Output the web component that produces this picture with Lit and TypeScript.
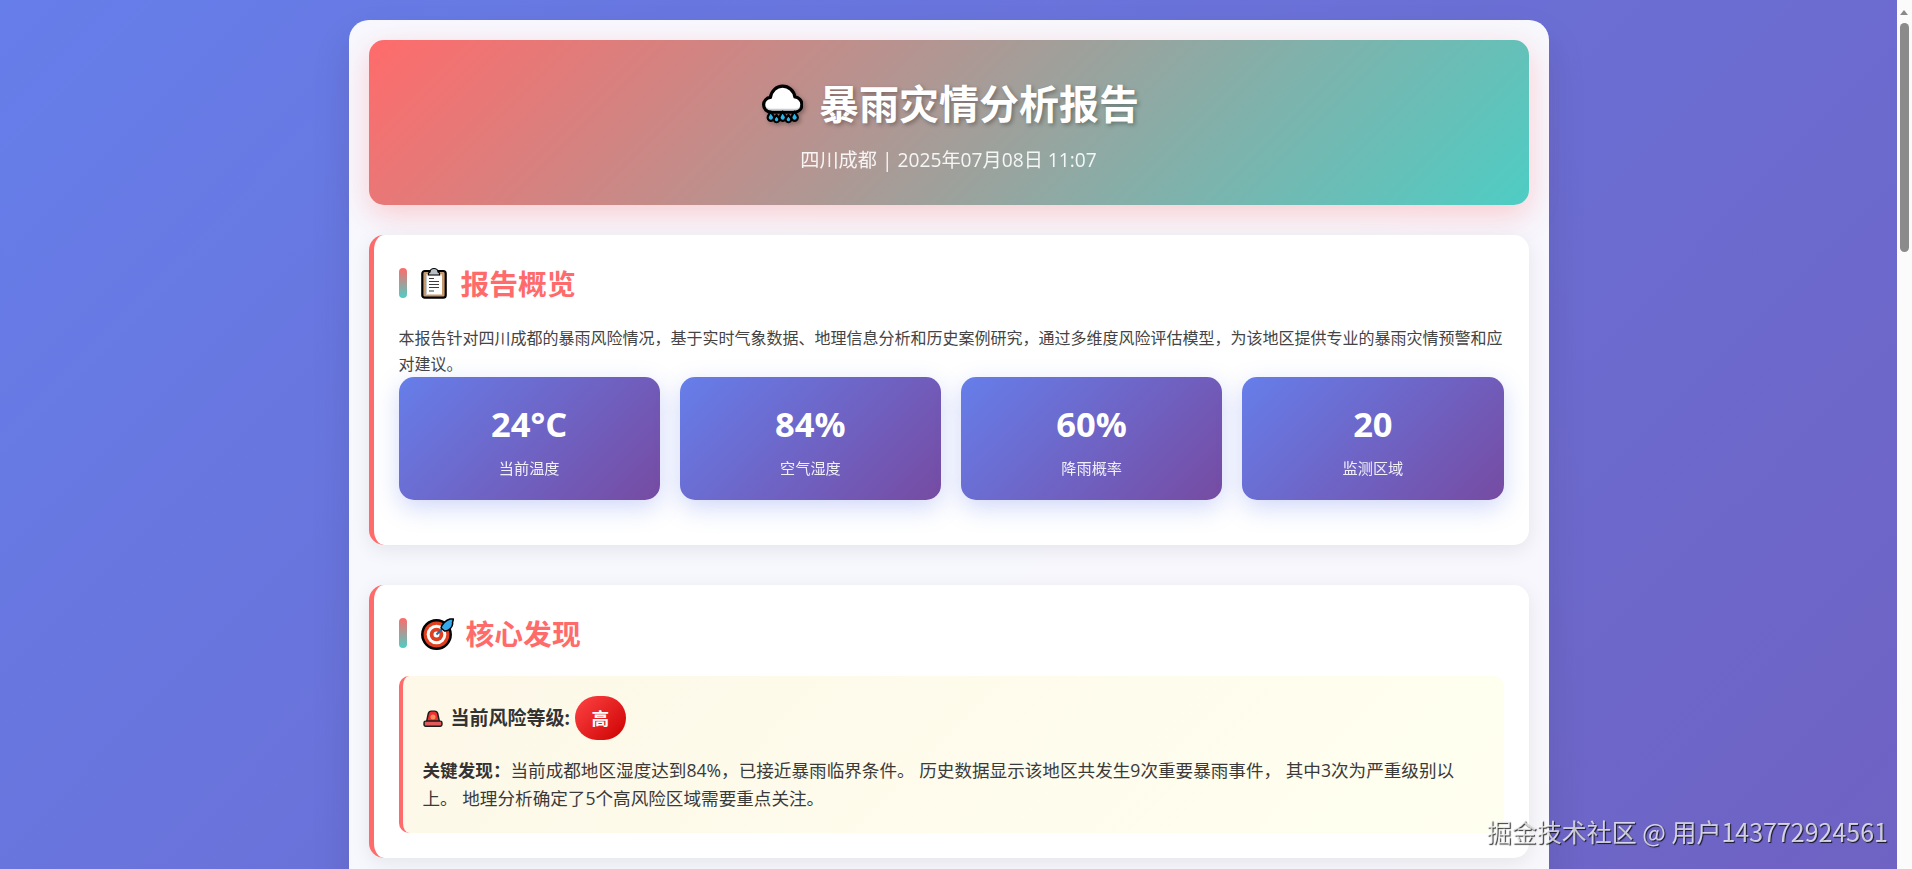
import { css, html, LitElement, svg } from "lit";
import { customElement } from "lit/decorators.js";

const rainIcon = svg`
  <path d="M10 27c-4.500 0-7.500-3-7.500-6.800 0-3.600 2.800-6.500 6.300-6.800C9.700 7.400 14.300 3 20 3c5.900 0 10.600 4.300 11.500 10 3.600.3 6.500 3.300 6.500 7 0 3.900-3 7-7 7z" fill="#fff" stroke="#000" stroke-width="3" stroke-linejoin="round"/>
  <path d="M4.500 21.500c.6 3 3 4 5.500 4h21c2.600 0 5-1.200 5.700-4-1 1.600-3 2.500-5.700 2.500H10c-2.600 0-4.500-.9-5.500-2.500z" fill="#c9ccd1"/>
  <g fill="#29b6e8" stroke="#000" stroke-width="2" stroke-linejoin="round">
    <path d="M9 26.500l3 4.500a3 3 0 1 1-5.600 0z"/>
    <path d="M20 26.500l3 4.500a3 3 0 1 1-5.600 0z"/>
    <path d="M31 26.500l3 4.500a3 3 0 1 1-5.600 0z"/>
    <path d="M14.500 29.500l2.400 3.300a2.600 2.600 0 1 1-4.800 0z"/>
    <path d="M25.500 29.500l2.400 3.300a2.600 2.600 0 1 1-4.800 0z"/>
  </g>`;

const clipboardIcon = svg`
  <rect x="1.300" y="4" width="23.400" height="26.700" rx="2.500" fill="#c69a6d" stroke="#000" stroke-width="2.200"/>
  <rect x="5" y="7.500" width="16" height="20" fill="#fff"/>
  <path d="M5 7.500h16v1H6v19H5z" fill="#c8ccd0"/>
  <path d="M9 5c0-2 2-3.500 4-3.500s4 1.500 4 3.500l1.500 1v2h-11V6z" fill="#b9bfc5" stroke="#000" stroke-width="1.200" stroke-linejoin="round"/>
  <path d="M8 11.500h5M8 14.500h10M8 17.500h10M8 20.500h10M8 24h5" stroke="#3c3c3c" stroke-width="1.200" fill="none"/>`;

const targetIcon = svg`
  <circle cx="15.500" cy="17.500" r="14.200" fill="#e0401f" stroke="#000" stroke-width="2.500"/>
  <circle cx="15.500" cy="17.500" r="9.800" fill="#fff"/>
  <circle cx="15.500" cy="17.500" r="6.800" fill="#e0401f"/>
  <circle cx="15.500" cy="17.500" r="3" fill="#fff"/>
  <path d="M15.500 17.500L23 10" stroke="#1f6fb5" stroke-width="2"/>
  <path d="M20 11c1-4 5-8 9-9l3.500 0-1 3.500c1 4-4 9-8 8.500z" fill="#35a9ee" stroke="#000" stroke-width="1.500" stroke-linejoin="round"/>`;

const sirenIcon = svg`
  <path d="M3.500 10.500l1.500-7C5.400 1.800 6.500 1 8 1h3c1.500 0 2.600.8 3 2.500l1.500 7z" fill="#ee2f2f" stroke="#1c1c1c" stroke-width="1.400" stroke-linejoin="round"/>
  <circle cx="9.500" cy="6.500" r="2.400" fill="#ff8a5c"/>
  <rect x="1" y="10.500" width="17" height="4.800" rx="1.500" fill="#e25a5a" stroke="#1c1c1c" stroke-width="1.400"/>`;

const stats = [
  { value: "24°C", label: "当前温度" },
  { value: "84%", label: "空气湿度" },
  { value: "60%", label: "降雨概率" },
  { value: "20", label: "监测区域" },
];

@customElement("app-root")
export class AppRoot extends LitElement {
  static styles = css`
    :host {
      display: flex;
      height: 100vh;
      overflow: hidden;
      font-family: "Open Sans", "Noto Sans CJK SC", sans-serif;
      font-size: 16px;
      line-height: 1.6;
      color: #333;
    }

    .viewport {
      flex: 1;
      min-width: 0;
      overflow: hidden;
    }

    .page {
      min-height: 3155px;
      padding: 20px 0;
      box-sizing: border-box;
      background: linear-gradient(135deg, #667eea 0%, #764ba2 100%);
    }

    .container {
      width: 1200px;
      margin: 0 auto;
      padding: 20px;
      box-sizing: border-box;
      min-height: 3115px;
      background: rgba(255, 255, 255, 0.95);
      border-radius: 20px;
      box-shadow: 0 20px 40px rgba(0, 0, 0, 0.1);
    }

    .header {
      padding: 30px;
      text-align: center;
      color: #fff;
      border-radius: 15px;
      margin-bottom: 30px;
      background: linear-gradient(135deg, #ff6b6b, #4ecdc4);
      box-shadow: 0 10px 30px rgba(255, 107, 107, 0.3);
    }

    h1 {
      margin: 0 0 8px;
      padding: 2px 0 0 4px;
      font-size: 40px;
      font-weight: 700;
      line-height: 64px;
      display: flex;
      justify-content: center;
      align-items: center;
      gap: 16px;
      text-shadow: 2px 2px 4px rgba(0, 0, 0, 0.3);
    }

    .rain {
      width: 41px;
      height: 40px;
      filter: drop-shadow(2px 2px 2px rgba(0, 0, 0, 0.3));
    }

    .subtitle {
      font-size: 19.2px;
      line-height: 31px;
      opacity: 0.9;
    }

    .section {
      margin-bottom: 40px;
      padding: 25px;
      background: #fff;
      border-left: 5px solid #ff6b6b;
      border-radius: 15px;
      box-shadow: 0 5px 20px rgba(0, 0, 0, 0.08);
    }

    h2 {
      margin: 0 0 20px;
      display: flex;
      align-items: center;
      height: 46px;
      font-size: 28.8px;
      font-weight: 700;
      line-height: 44px;
      color: #ff6b6b;
    }

    .title-text {
      padding-top: 2px;
    }

    .bar {
      width: 8px;
      height: 30px;
      margin-right: 14px;
      border-radius: 4px;
      background: linear-gradient(180deg, #ff6b6b, #4ecdc4);
    }

    .clipboard {
      width: 26px;
      height: 32px;
      margin-right: 14px;
    }

    .target {
      width: 33px;
      height: 33px;
      margin-right: 12px;
    }

    p {
      margin: 0;
      color: #444;
    }

    .stats {
      display: grid;
      grid-template-columns: repeat(4, 1fr);
      gap: 20px;
      margin-bottom: 20px;
    }

    .stat {
      padding: 20px;
      text-align: center;
      color: #fff;
      border-radius: 15px;
      background: linear-gradient(135deg, #667eea, #764ba2);
      box-shadow: 0 8px 25px rgba(102, 126, 234, 0.3);
    }

    .value {
      font-size: 34.5px;
      font-weight: 700;
      line-height: 53px;
      margin-bottom: 7px;
    }

    .label {
      font-size: 15.2px;
      line-height: 23px;
      opacity: 0.9;
    }

    .finding {
      padding: 20px;
      border-left: 4px solid #ff6b6b;
      border-radius: 10px;
      background: linear-gradient(135deg, #fdf8e8, #fffff0);
    }

    .risk {
      display: flex;
      align-items: center;
      margin-bottom: 16px;
      font-size: 19px;
      font-weight: 700;
    }

    .siren {
      width: 20px;
      height: 17px;
      margin-right: 8px;
    }

    .badge {
      width: 51px;
      height: 44px;
      margin-left: 5px;
      display: flex;
      align-items: center;
      justify-content: center;
      color: #fff;
      font-size: 17.6px;
      border-radius: 25px;
      background: linear-gradient(135deg, #ff4444, #cc0000);
    }

    .finding p {
      font-size: 17.6px;
      line-height: 28.160px;
      color: #3a3a3a;
    }

    .finding strong {
      color: #333;
    }

    .scrollbar {
      width: 15px;
      flex: none;
      position: relative;
      background: #fbfbfb;
    }

    .arrow {
      position: absolute;
      top: 10px;
      left: 3px;
      border-left: 4.500px solid transparent;
      border-right: 4.500px solid transparent;
      border-bottom: 5px solid #8a8a8a;
    }

    .thumb {
      position: absolute;
      top: 23px;
      left: 3px;
      width: 9px;
      height: 229px;
      border-radius: 5px;
      background: #8b8b8b;
    }

    .watermark {
      position: fixed;
      right: 24px;
      bottom: 22px;
      font-family: "Noto Sans CJK SC", sans-serif;
      font-size: 25px;
      line-height: 32px;
      color: rgba(255, 255, 255, 0.75);
      text-shadow: 1px 1px 1px rgba(0, 0, 0, 0.8);
      white-space: nowrap;
    }
  `;

  render() {
    return html`
      <div class="viewport">
        <div class="page">
          <div class="container">
            <header class="header">
              <h1>
                <svg class="rain" viewBox="1 1 38 37">${rainIcon}</svg>
                暴雨灾情分析报告
              </h1>
              <div class="subtitle">四川成都 | 2025年07月08日 11:07</div>
            </header>

            <section class="section">
              <h2>
                <span class="bar"></span>
                <svg class="clipboard" viewBox="0 0 26 32">${clipboardIcon}</svg>
                <span class="title-text">报告概览</span>
              </h2>
              <p>
                本报告针对四川成都的暴雨风险情况，基于实时气象数据、地理信息分析和历史案例研究，通过多维度风险评估模型，为该地区提供专业的暴雨灾情预警和应对建议。
              </p>
              <div class="stats">
                ${stats.map(
                  (s) => html`
                    <div class="stat">
                      <div class="value">${s.value}</div>
                      <div class="label">${s.label}</div>
                    </div>
                  `
                )}
              </div>
            </section>

            <section class="section">
              <h2>
                <span class="bar"></span>
                <svg class="target" viewBox="0 0 33 33">${targetIcon}</svg>
                <span class="title-text">核心发现</span>
              </h2>
              <div class="finding">
                <div class="risk">
                  <svg class="siren" viewBox="0 0 19 16">${sirenIcon}</svg>
                  当前风险等级:
                  <span class="badge">高</span>
                </div>
                <p>
                  <strong>关键发现：</strong>当前成都地区湿度达到84%，已接近暴雨临界条件。
                  历史数据显示该地区共发生9次重要暴雨事件，
                  其中3次为严重级别以上。 地理分析确定了5个高风险区域需要重点关注。
                </p>
              </div>
            </section>
          </div>
        </div>
      </div>
      <div class="scrollbar">
        <div class="arrow"></div>
        <div class="thumb"></div>
      </div>
      <div class="watermark">掘金技术社区 @ 用户143772924561</div>
    `;
  }
}
